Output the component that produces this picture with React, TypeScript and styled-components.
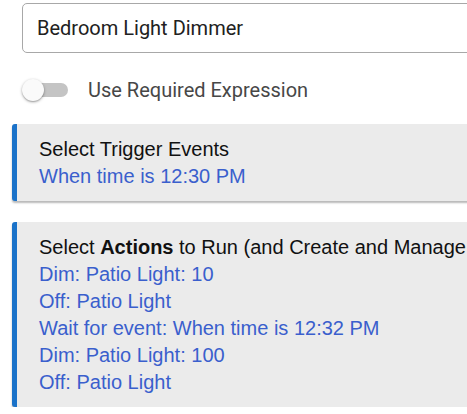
import React from 'react';
import styled, { createGlobalStyle } from 'styled-components';

const GlobalStyle = createGlobalStyle`
  html, body {
    margin: 0;
    padding: 0;
    background: #ffffff;
    overflow: hidden;
  }
`;

const Page = styled.div`
  width: 620px;
  padding: 3px 0 0 12px;
  box-sizing: border-box;
`;

const NameField = styled.div`
  margin-left: 10px;
  height: 50px;
  box-sizing: border-box;
  border: 1px solid #a8a8a8;
  border-radius: 5px;
  display: flex;
  align-items: center;
  padding-left: 14px;
  font-family: Roboto, 'Noto Sans', sans-serif;
  font-size: 20px;
  color: #212121;
`;

const ToggleRow = styled.label`
  display: flex;
  align-items: center;
  gap: 20px;
  margin: 25px 0 0 10px;
  height: 24px;
  font-family: Roboto, 'Noto Sans', sans-serif;
  font-size: 20px;
  color: #474747;
`;

const Switch = styled.span`
  position: relative;
  width: 45px;
  height: 14px;
  margin-left: 1px;
  border-radius: 7px;
  background: #c4c4c4;
`;

const Knob = styled.span`
  position: absolute;
  left: -1px;
  top: -4px;
  width: 22px;
  height: 22px;
  border-radius: 50%;
  background: #fafafa;
  box-shadow: 0 1px 3px rgba(0, 0, 0, 0.35), 0 1px 1px rgba(0, 0, 0, 0.12);
`;

const Card = styled.div<{ $gap: number }>`
  margin-top: ${p => p.$gap}px;
  background: #ebebeb;
  border-left: 5px solid #1a72c9;
  border-radius: 3px;
  box-shadow: 0 2px 2px rgba(0, 0, 0, 0.28);
  padding: 12px 0 11px 22px;
  font-family: 'Liberation Sans', Arial, sans-serif;
  font-size: 20px;
  line-height: 27px;
  white-space: nowrap;
`;

const CardTitle = styled.div`
  color: #111111;
`;

const Item = styled.div`
  color: #3a5fcd;
`;

const actions = [
  'Dim: Patio Light: 10',
  'Off: Patio Light',
  'Wait for event: When time is 12:32 PM',
  'Dim: Patio Light: 100',
  'Off: Patio Light',
];

const App: React.FC = () => {
  return (
    <>
      <GlobalStyle />
      <Page>
        <NameField>Bedroom Light Dimmer</NameField>
        <ToggleRow>
          <Switch>
            <Knob />
          </Switch>
          Use Required Expression
        </ToggleRow>
        <Card $gap={22}>
          <CardTitle>Select Trigger Events</CardTitle>
          <Item>When time is 12:30 PM</Item>
        </Card>
        <Card $gap={21}>
          <CardTitle>
            Select <b>Actions</b> to Run (and Create and Manage Local Variables)
          </CardTitle>
          {actions.map((a, i) => (
            <Item key={i}>{a}</Item>
          ))}
        </Card>
      </Page>
    </>
  );
};

export default App;
